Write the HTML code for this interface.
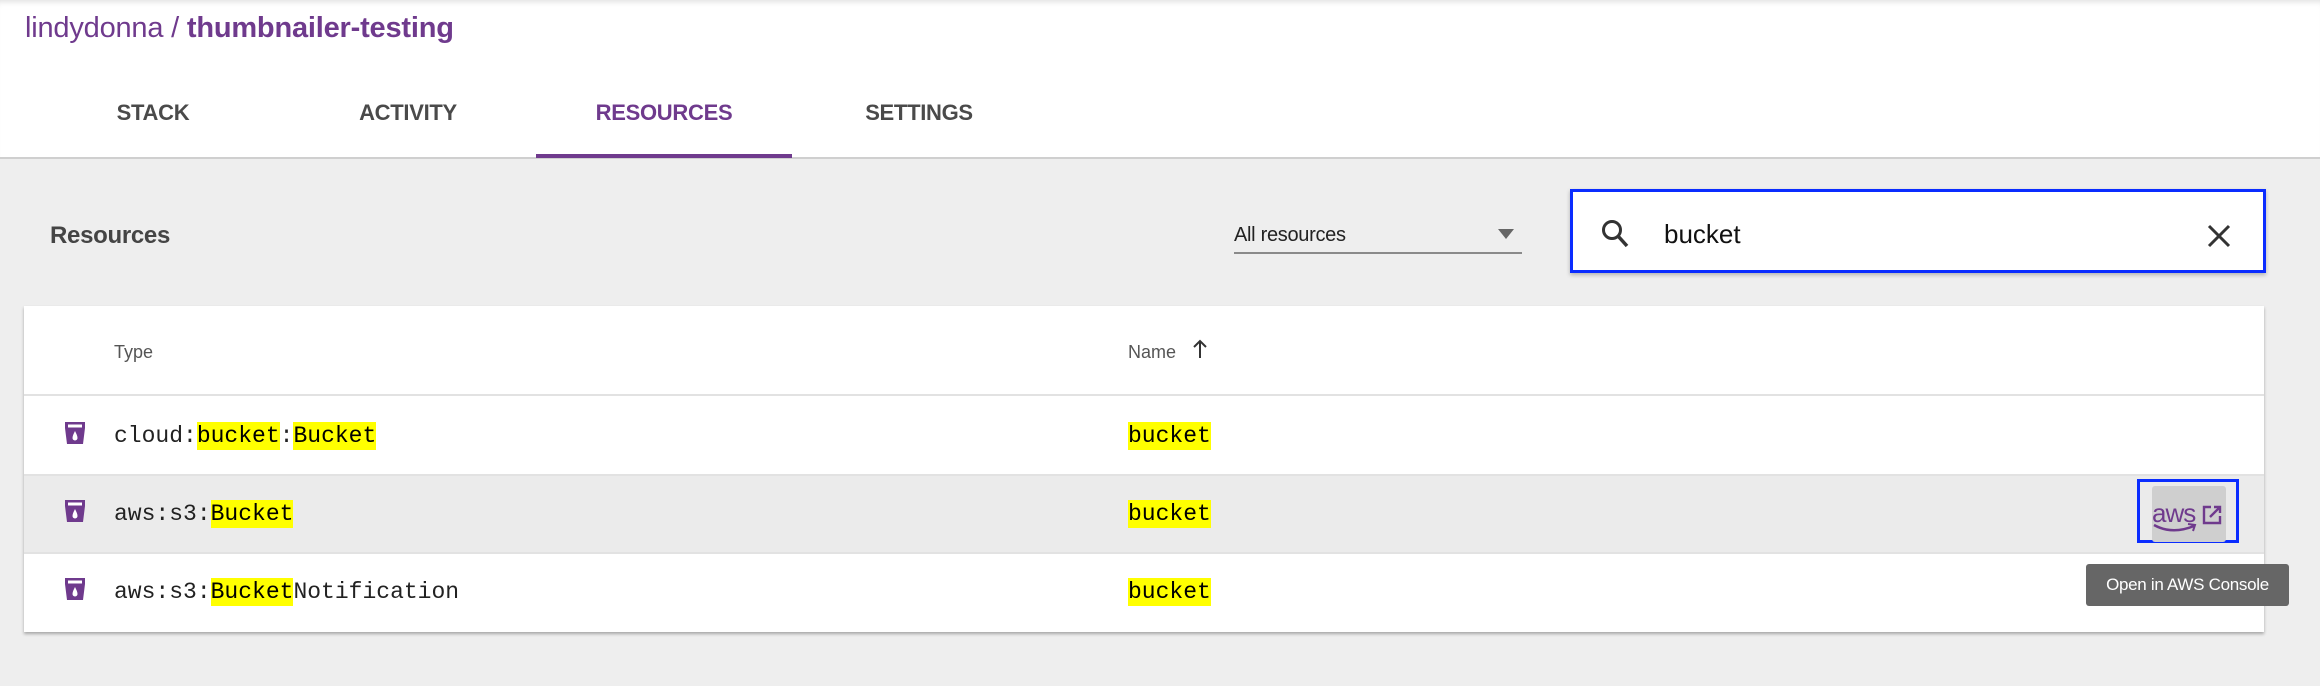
<!DOCTYPE html>
<html><head><meta charset="utf-8"><style>
*{margin:0;padding:0;box-sizing:border-box}
body{width:2320px;height:686px;background:#eeeeee;font-family:"Liberation Sans",sans-serif;position:relative;overflow:hidden}
.a{position:absolute}
.hdr{left:0;top:0;width:2320px;height:158px;background:#fff;box-shadow:inset 0 6px 6px -4px rgba(0,0,0,.12)}
.line{left:0;top:157px;width:2320px;height:2px;background:#cfcfcf}
.title{left:25px;top:12px;font-size:29px;color:#6f3a8d;letter-spacing:-0.2px}
.tab{top:100px;width:256px;text-align:center;font-size:22px;font-weight:bold;color:#4a4a4a;letter-spacing:-0.3px}
.mono{font-family:"Liberation Mono",monospace;font-size:23px;color:#222}
.hl{background:#ffff00;color:#000;display:inline-block;line-height:28px}
.row{left:24px;width:2240px;border-top:2px solid #e2e2e2}
</style></head><body>
<div class="a hdr"></div>
<div class="a line"></div>
<div class="a title">lindydonna / <span style="font-weight:600">thumbnailer-testing</span></div>
<div class="a tab" style="left:25px">STACK</div>
<div class="a tab" style="left:280px">ACTIVITY</div>
<div class="a tab" style="left:536px;color:#6f3a8d">RESOURCES</div>
<div class="a tab" style="left:791px">SETTINGS</div>
<div class="a" style="left:536px;top:154px;width:256px;height:4px;background:#6f3a8d"></div>

<div class="a" style="left:50px;top:222px;font-size:24px;font-weight:bold;color:#444;letter-spacing:-0.3px">Resources</div>
<div class="a" style="left:1234px;top:224px;font-size:20px;color:#222;letter-spacing:-0.3px">All resources</div>
<div class="a" style="left:1498px;top:229px;width:0;height:0;border-left:8px solid transparent;border-right:8px solid transparent;border-top:10px solid #666"></div>
<div class="a" style="left:1234px;top:252px;width:288px;height:2px;background:#8a8a8a"></div>

<div class="a" style="left:1570px;top:189px;width:696px;height:84px;background:#fff;border:3px solid #0a2cff;box-shadow:0 2px 4px rgba(0,0,0,.25)"></div>
<svg class="a" style="left:1600px;top:218px" width="34" height="32" viewBox="0 0 34 32"><circle cx="12" cy="12" r="8.5" fill="none" stroke="#333" stroke-width="3"/><line x1="18" y1="18" x2="27" y2="28" stroke="#333" stroke-width="3.5"/></svg>
<div class="a" style="left:1664px;top:219px;font-size:26px;color:#111">bucket</div>
<svg class="a" style="left:2206px;top:223px" width="26" height="26" viewBox="0 0 26 26"><path d="M3 3L23 23M23 3L3 23" stroke="#333" stroke-width="3"/></svg>

<div class="a" style="left:24px;top:306px;width:2240px;height:326px;background:#fff;box-shadow:0 2px 3px rgba(0,0,0,.3)"></div>
<div class="a" style="left:114px;top:342px;font-size:18px;color:#555">Type</div>
<div class="a" style="left:1128px;top:342px;font-size:18px;color:#555">Name</div>
<svg class="a" style="left:1192px;top:338px" width="16" height="22" viewBox="0 0 16 22"><path d="M8 20V3M2 9L8 3L14 9" stroke="#333" stroke-width="2" fill="none"/></svg>

<div class="a row" style="top:394px;height:81px"></div>
<div class="a row" style="top:474px;height:80px;background:#ebebeb"></div>
<div class="a row" style="top:552px;height:80px"></div>

<svg width="0" height="0" style="position:absolute"><defs><symbol id="bk" viewBox="0 0 20 22"><path d="M0 0H20V6L18 22H2L0 6Z" fill="#6f3a8d"/><rect x="3" y="2.5" width="14" height="3" fill="#fff"/><path d="M10 9C8.5 12 7.5 14 7.5 16A2.5 2.5 0 0 0 12.5 16C12.5 14 11.5 12 10 9Z" fill="#fff"/></symbol></defs></svg>
<svg class="a" style="left:65px;top:422px" width="20" height="22"><use href="#bk"/></svg>
<svg class="a" style="left:65px;top:500px" width="20" height="22"><use href="#bk"/></svg>
<svg class="a" style="left:65px;top:578px" width="20" height="22"><use href="#bk"/></svg>

<div class="a mono" style="left:114px;top:422px">cloud:<span class="hl">bucket</span>:<span class="hl">Bucket</span></div>
<div class="a mono" style="left:114px;top:500px">aws:s3:<span class="hl">Bucket</span></div>
<div class="a mono" style="left:114px;top:578px">aws:s3:<span class="hl">Bucket</span>Notification</div>
<div class="a mono" style="left:1128px;top:422px"><span class="hl">bucket</span></div>
<div class="a mono" style="left:1128px;top:500px"><span class="hl">bucket</span></div>
<div class="a mono" style="left:1128px;top:578px"><span class="hl">bucket</span></div>

<div class="a" style="left:2137px;top:479px;width:102px;height:64px;border:3px solid #0a2cff"></div>
<div class="a" style="left:2152px;top:486px;width:74px;height:56px;background:#cfcfcf;border-radius:3px"></div>
<div class="a" style="left:2152px;top:498px;font-size:26px;color:#6f3a8d;letter-spacing:-1px">aws</div>
<svg class="a" style="left:2152px;top:522px" width="50" height="14" viewBox="0 0 50 14"><path d="M2 3Q20 13 42 4" stroke="#6f3a8d" stroke-width="2.5" fill="none"/><path d="M36 2L43 3L41 9" stroke="#6f3a8d" stroke-width="2" fill="none"/></svg>
<svg class="a" style="left:2202px;top:505px" width="20" height="20" viewBox="0 0 20 20"><path d="M9 2H2V18H18V11" stroke="#6f3a8d" stroke-width="2.4" fill="none"/><path d="M8 12L18 2M12 2H18V8" stroke="#6f3a8d" stroke-width="2.4" fill="none"/></svg>

<div class="a" style="left:2086px;top:564px;width:203px;height:42px;background:#666;border-radius:3px;color:#fff;font-size:17px;line-height:42px;text-align:center;letter-spacing:-0.3px">Open in AWS Console</div>
</body></html>
